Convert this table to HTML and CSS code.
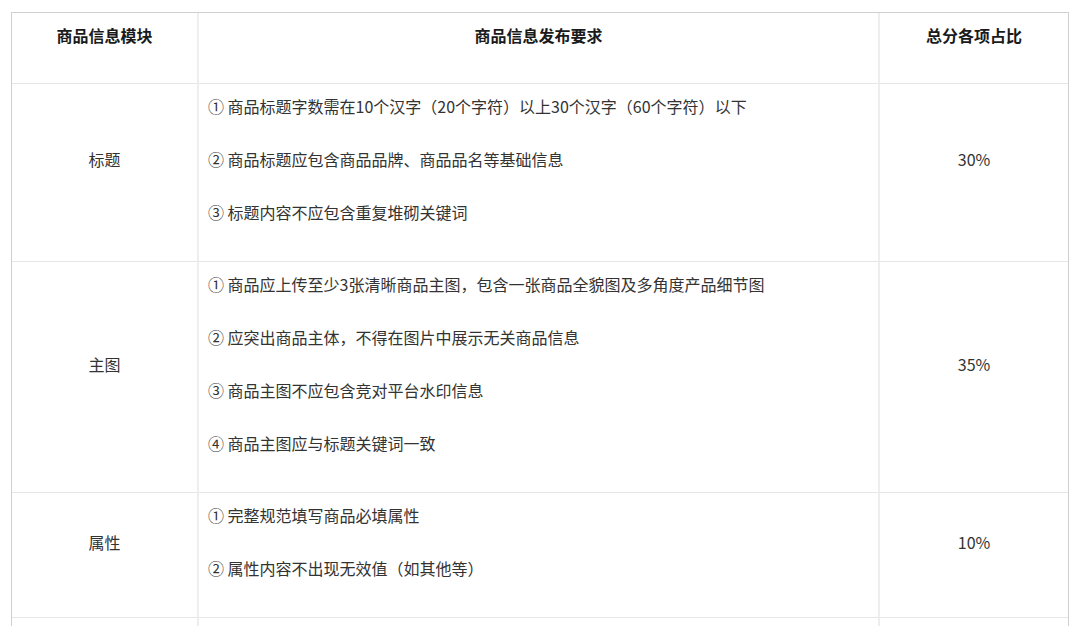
FILE: index.html
```html
<!DOCTYPE html>
<html lang="zh-CN">
<head>
    <meta charset="UTF-8">
    <meta name="viewport" content="width=device-width, initial-scale=1.0">
    <title>商品信息发布要求</title>
    <link rel="stylesheet" href="styles.css">
</head>
<body>
    <table class="rules">
        <colgroup>
            <col class="col-module">
            <col class="col-rule">
            <col class="col-share">
        </colgroup>
        <thead>
            <tr>
                <th><p>商品信息模块</p></th>
                <th><p>商品信息发布要求</p></th>
                <th><p>总分各项占比</p></th>
            </tr>
        </thead>
        <tbody>
            <tr>
                <td class="center"><p>标题</p></td>
                <td>
                    <p>① 商品标题字数需在10个汉字（20个字符）以上30个汉字（60个字符）以下</p>
                    <p>② 商品标题应包含商品品牌、商品品名等基础信息</p>
                    <p>③ 标题内容不应包含重复堆砌关键词</p>
                </td>
                <td class="center"><p>30%</p></td>
            </tr>
            <tr>
                <td class="center"><p>主图</p></td>
                <td>
                    <p>① 商品应上传至少3张清晰商品主图，包含一张商品全貌图及多角度产品细节图</p>
                    <p>② 应突出商品主体，不得在图片中展示无关商品信息</p>
                    <p>③ 商品主图不应包含竞对平台水印信息</p>
                    <p>④ 商品主图应与标题关键词一致</p>
                </td>
                <td class="center"><p>35%</p></td>
            </tr>
            <tr>
                <td class="center"><p>属性</p></td>
                <td>
                    <p>① 完整规范填写商品必填属性</p>
                    <p>② 属性内容不出现无效值（如其他等）</p>
                </td>
                <td class="center"><p>10%</p></td>
            </tr>
            <tr class="row-more">
                <td></td>
                <td></td>
                <td></td>
            </tr>
        </tbody>
    </table>
</body>
</html>
```

FILE: styles.css
```css
body {
    margin: 0;
    padding: 12px 11px;
    background-color: #ffffff;
    font-family: "Noto Sans CJK SC", "Noto Sans", sans-serif;
    color: #333333;
}

.rules {
    width: 1058px;
    border-collapse: separate;
    border-spacing: 0;
    border: 1px solid #cfcfcf;
    table-layout: fixed;
}

.col-module {
    width: 187px;
}

.col-rule {
    width: 681px;
}

.col-share {
    width: 188px;
}

th, td {
    padding: 9px 9px;
    border-bottom: 1px solid #e6e6e6;
    border-right: 2px solid #eeeeee;
    vertical-align: middle;
    text-align: left;
    font-size: 16px;
    font-weight: normal;
}

th:last-child, td:last-child {
    border-right: none;
}

th {
    padding-bottom: 8px;
    text-align: center;
    font-weight: bold;
    color: #1a1a1a;
}

.center {
    text-align: center;
}

.row-more td {
    height: 60px;
}

p {
    margin: 0 0 26.5px;
    line-height: 26.5px;
}
```
